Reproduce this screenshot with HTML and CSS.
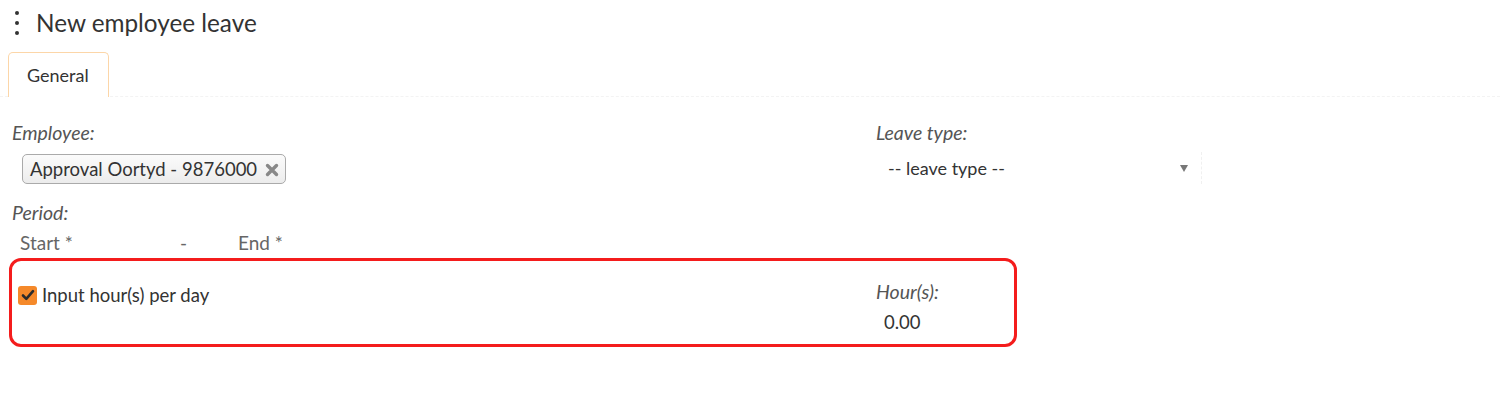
FILE: index.html
```html
<!DOCTYPE html>
<html>
<head>
<meta charset="utf-8">
<link rel="stylesheet" href="styles.css">
</head>
<body>
<header class="header">
  <span class="kebab"><i></i><i></i><i></i></span>
  <h1 class="title">New employee leave</h1>
</header>
<nav class="tabs">
  <div class="tab">General</div>
</nav>
<main class="form">
  <div class="row">
    <div class="field">
      <div class="label">Employee:</div>
      <div class="chip">Approval Oortyd - 9876000
        <svg class="chip-x" width="14" height="14" viewBox="0 0 14 14"><path d="M2.5 2.5 L11.5 11.5 M11.5 2.5 L2.5 11.5" stroke="#888" stroke-width="3.4" stroke-linecap="round"/></svg>
      </div>
      <div class="label period">Period:</div>
      <div class="dates"><span class="start">Start *</span><span class="dash">-</span><span>End *</span></div>
    </div>
    <div class="field">
      <div class="label">Leave type:</div>
      <div class="select"><span>-- leave type --</span><span class="caret"></span></div>
    </div>
  </div>
  <div class="highlight">
    <div class="hl-row">
      <label class="check">
        <span class="box"><svg width="14" height="12" viewBox="0 0 14 12"><path d="M2 6.5 L5.3 9.8 L12 2.2" fill="none" stroke="#2b2b2b" stroke-width="2.6" stroke-linecap="round" stroke-linejoin="round"/></svg></span>
        Input hour(s) per day
      </label>
      <div class="hours">
        <div class="label">Hour(s):</div>
        <div class="value">0.00</div>
      </div>
    </div>
  </div>
</main>
</body>
</html>
```
FILE: styles.css
```css
* { box-sizing: border-box; }
body {
  margin: 0;
  background: #fff;
  font-family: Lato, "Liberation Sans", sans-serif;
  color: #333;
}
.header {
  height: 45px;
  display: flex;
  align-items: center;
}
.kebab {
  width: 36px;
  display: flex;
  flex-direction: column;
  align-items: center;
  gap: 6px;
  padding-right: 2px;
}
.kebab i {
  display: block;
  width: 4px;
  height: 4px;
  border-radius: 50%;
  background: #333;
}
.title {
  margin: 0;
  font-size: 24.3px;
  font-weight: 400;
  color: #333;
}
.tabs {
  margin-top: 7px;
  height: 45px;
  border-bottom: 1px dashed #f3f3f3;
  display: flex;
  padding-left: 8px;
}
.tab {
  width: 101px;
  height: 45px;
  border: 1px solid #fcd6a8;
  border-bottom: none;
  border-radius: 5px 5px 0 0;
  padding-left: 18px;
  display: flex;
  align-items: center;
  font-size: 18px;
  color: #333;
  background: #fff;
}
.form {
  padding: 26px 0 0 12px;
}
.row {
  display: grid;
  grid-template-columns: 864px 330px;
}
.label {
  font-style: italic;
  font-size: 19.5px;
  color: #555;
  line-height: 20px;
  height: 20px;
}
.chip {
  margin: 11px 0 0 10px;
  display: inline-flex;
  align-items: center;
  gap: 8px;
  height: 30px;
  padding: 0 6px 0 7px;
  border: 1px solid #aaa;
  border-radius: 5px;
  background: linear-gradient(#fbfbfb 0%, #f4f4f4 50%, #ececec 100%);
  font-size: 18.5px;
  color: #333;
}
.chip-x { margin-top: 1px; }
.period { margin-top: 19px; }
.dates {
  margin-top: 10px;
  height: 20px;
  line-height: 20px;
  font-size: 19px;
  color: #666;
  padding-left: 8px;
  display: flex;
}
.dates .start { width: 160px; }
.dates .dash { width: 58px; }
.select {
  margin-top: 9px;
  height: 32px;
  width: 326px;
  display: flex;
  align-items: center;
  justify-content: space-between;
  padding: 0 13px 0 12px;
  font-size: 18px;
  color: #333;
  border-right: 1px dashed #f0f0f0;
}
.caret {
  width: 0;
  height: 0;
  border-left: 4.5px solid transparent;
  border-right: 4.5px solid transparent;
  border-top: 7px solid #777;
}
.highlight {
  margin: 5px 0 0 -3px;
  width: 1008px;
  height: 89px;
  border: 3px solid #f41c1c;
  border-radius: 12px;
}
.hl-row {
  display: grid;
  grid-template-columns: 864px 1fr;
  padding-top: 21px;
}
.check {
  display: flex;
  align-items: center;
  gap: 5px;
  font-size: 18.5px;
  color: #333;
  height: 26px;
  margin-left: 6px;
}
.box {
  width: 19px;
  height: 19px;
  background: #f5892a;
  border-radius: 3px;
  display: flex;
  align-items: center;
  justify-content: center;
}
.value {
  margin-top: 10px;
  padding-left: 8px;
  font-size: 18.5px;
  color: #333;
  line-height: 20px;
}
```
